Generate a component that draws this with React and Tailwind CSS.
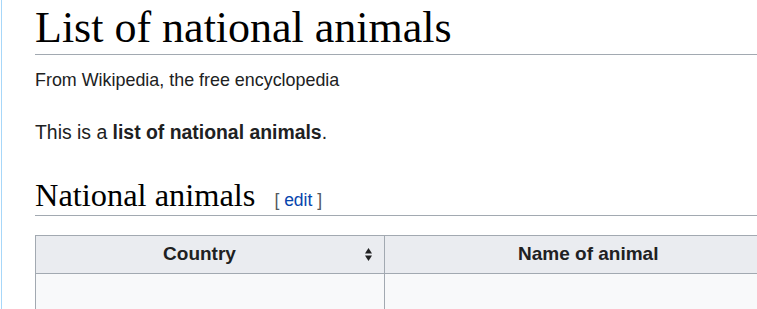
import React from "react";

function SortIcon() {
  return (
    <svg width="7" height="13" viewBox="0 0 7 13" className="block h-[13px] w-[7px] shrink-0">
      <path d="M3.5 0 L7 5.5 L0 5.5 Z" fill="#202122" />
      <path d="M0 7.5 L7 7.5 L3.5 13 Z" fill="#202122" />
    </svg>
  );
}

function App() {
  return (
    <div className="min-h-screen overflow-hidden bg-white font-['Liberation_Sans',Arial,sans-serif] text-[#202122]">
      <div className="ml-px min-h-screen border-l border-[#a7d7f9] pl-[33px]">
        <h1 className="border-b border-[#a2a9b1] pt-[4px] pb-[2px] font-['Liberation_Serif','Times_New_Roman',serif] text-[44px] leading-[48px] text-black">
          List of national animals
        </h1>
        <div className="mt-[13px] text-[17.9px] leading-[24px]">From Wikipedia, the free encyclopedia</div>

        <p className="mt-[28px] text-[19.4px] leading-[24px]">
          This is a <b>list of national animals</b>.
        </p>

        <h2 className="mt-[33px] border-b border-[#a2a9b1] pb-[2px] font-['Liberation_Serif','Times_New_Roman',serif] text-[32.4px] leading-[36px] text-black">
          National animals
          <span className="ml-[19px] align-baseline font-['Liberation_Sans',Arial,sans-serif] text-[17.5px] leading-none text-[#54595d]">
            [ <a className="text-[#0645ad]">edit</a> ]
          </span>
        </h2>

        <table className="mt-[19px] w-[760px] border-collapse border border-[#a2a9b1] bg-[#f8f9fa] text-[19px] leading-[24px]">
          <thead>
            <tr className="bg-[#eaecf0]">
              <th className="w-[349px] border border-[#a2a9b1] pt-[6px] pb-[7px] pl-[9px] pr-[12px] font-bold">
                <div className="flex items-center gap-[11px]">
                  <span className="flex-1 text-center">Country</span>
                  <SortIcon />
                </div>
              </th>
              <th className="border border-[#a2a9b1] pt-[6px] pb-[7px] font-bold">
                <div className="pl-[2px] text-left">
                  <span className="ml-[131px]">Name of animal</span>
                </div>
              </th>
            </tr>
          </thead>
          <tbody>
            <tr>
              <td className="h-[42px] border border-[#a2a9b1]"></td>
              <td className="h-[42px] border border-[#a2a9b1]"></td>
            </tr>
          </tbody>
        </table>
      </div>
    </div>
  );
}

export default App;
